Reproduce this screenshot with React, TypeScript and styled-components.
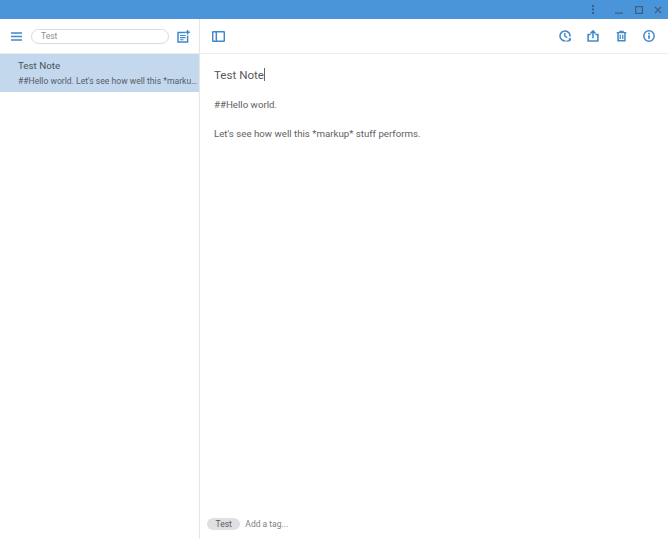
import { createGlobalStyle, styled } from "styled-components";

const ICON_BLUE = "#4289c9";
const CHROME_ICON = "#3d5f80";

const GlobalStyle = createGlobalStyle`
  html, body {
    margin: 0;
    padding: 0;
    height: 100%;
    overflow: hidden;
    background: #fff;
    font-family: Roboto, "Liberation Sans", sans-serif;
  }
  #root { height: 100%; }
`;

const Window = styled.div`
  width: 668px;
  height: 539px;
  display: flex;
  flex-direction: column;
  background: #fff;
`;

const TitleBar = styled.div`
  height: 19px;
  flex: none;
  background: #4a94da;
  display: flex;
  align-items: center;
  justify-content: flex-end;
`;

const TitleButton = styled.button<{ $gap?: number }>`
  width: 19.5px;
  height: 19px;
  margin-right: ${(p) => p.$gap ?? 0}px;
  padding: 0;
  border: 0;
  background: none;
  display: flex;
  align-items: center;
  justify-content: center;
`;

const Body = styled.div`
  flex: 1;
  min-height: 0;
  display: flex;
`;

const Sidebar = styled.aside`
  width: 200px;
  flex: none;
  box-sizing: border-box;
  border-right: 1px solid #e6e6e6;
  display: flex;
  flex-direction: column;
`;

const SideToolbar = styled.div`
  height: 35px;
  flex: none;
  box-sizing: border-box;
  border-bottom: 1px solid #ececec;
  display: flex;
  align-items: center;
  padding: 0 9px 0 9px;
`;

const IconButton = styled.button`
  width: 14px;
  height: 14px;
  padding: 0;
  border: 0;
  background: none;
  flex: none;
  display: flex;
  align-items: center;
  justify-content: center;
`;

const SearchBox = styled.div`
  width: 138px;
  height: 15px;
  box-sizing: border-box;
  margin: 0 auto 0 8px;
  padding-left: 9px;
  border: 1px solid #dadada;
  border-radius: 8px;
  font-size: 8.5px;
  line-height: 13px;
  color: #8f8f8f;
`;

const NoteRow = styled.div`
  height: 38px;
  box-sizing: border-box;
  padding: 6px 2px 0 18px;
  background: #c3d8ed;
`;

const NoteTitle = styled.div`
  font-size: 9.8px;
  line-height: 12px;
  color: #4a525c;
`;

const NotePreview = styled.div`
  margin-top: 3px;
  font-size: 8.6px;
  line-height: 12px;
  color: #555d66;
  white-space: nowrap;
  overflow: hidden;
  text-overflow: ellipsis;
`;

const Main = styled.main`
  flex: 1;
  min-width: 0;
  display: flex;
  flex-direction: column;
`;

const MainToolbar = styled.div`
  height: 35px;
  flex: none;
  box-sizing: border-box;
  border-bottom: 1px solid #ececec;
  display: flex;
  align-items: center;
  padding: 0 12px 0 11px;
`;

const ToolbarActions = styled.div`
  margin-left: auto;
  display: flex;
  gap: 14px;
`;

const Editor = styled.div`
  flex: 1;
  padding: 14px 14px 0;
`;

const Heading = styled.div`
  font-size: 11.6px;
  line-height: 15px;
  color: #595959;
`;

const Caret = styled.span`
  display: inline-block;
  width: 1px;
  height: 13px;
  margin-bottom: -2px;
  background: #666;
`;

const Paragraph = styled.p`
  margin: 14px 0 0;
  font-size: 9.7px;
  line-height: 15px;
  color: #616161;
`;

const TagBar = styled.div`
  height: 31px;
  flex: none;
  display: flex;
  align-items: center;
  padding: 0 7px;
  gap: 5px;
`;

const Tag = styled.span`
  height: 12px;
  padding: 0 8.5px;
  border-radius: 6px;
  background: #e0e0e3;
  font-size: 8.5px;
  line-height: 12px;
  color: #5a5a5a;
`;

const TagPlaceholder = styled.span`
  font-size: 8.5px;
  color: #808080;
`;

const Stroke = {
  fill: "none",
  stroke: ICON_BLUE,
  strokeWidth: 1.5,
} as const;

const App = () => (
  <>
    <GlobalStyle />
    <Window>
      <TitleBar>
        <TitleButton $gap={7}>
          <svg width="4" height="9" viewBox="0 0 4 9">
            <g fill={CHROME_ICON}>
              <rect x="1" y="0" width="2" height="2" />
              <rect x="1" y="3.5" width="2" height="2" />
              <rect x="1" y="7" width="2" height="2" />
            </g>
          </svg>
        </TitleButton>
        <TitleButton>
          <svg width="8" height="8" viewBox="0 0 8 8">
            <rect y="6.5" width="8" height="1.2" fill={CHROME_ICON} />
          </svg>
        </TitleButton>
        <TitleButton>
          <svg width="8" height="8" viewBox="0 0 8 8">
            <rect x=".6" y=".6" width="6.8" height="6.8" fill="none" stroke={CHROME_ICON} strokeWidth="1.2" />
          </svg>
        </TitleButton>
        <TitleButton>
          <svg width="8" height="8" viewBox="0 0 8 8">
            <path d="M1 1l6 6M7 1L1 7" stroke={CHROME_ICON} strokeWidth="1.1" />
          </svg>
        </TitleButton>
      </TitleBar>
      <Body>
        <Sidebar>
          <SideToolbar>
            <IconButton>
              <svg width="11" height="9" viewBox="0 0 11 9">
                <path d="M0 1h11M0 4.5h11M0 8h11" {...Stroke} />
              </svg>
            </IconButton>
            <SearchBox>Test</SearchBox>
            <IconButton>
              <svg width="13" height="13" viewBox="0 0 13 13">
                <path d="M8 2.5H1v9.6h9.6V5.5" {...Stroke} />
                <path d="M3 5.5h5.6M3 7.6h5.6M3 9.7h3.6" {...Stroke} strokeWidth={1.1} />
                <path d="M10.6 0v4.6M8.3 2.3h4.6" {...Stroke} />
              </svg>
            </IconButton>
          </SideToolbar>
          <NoteRow>
            <NoteTitle>Test Note</NoteTitle>
            <NotePreview>##Hello world. Let's see how well this *markup* stuff performs.</NotePreview>
          </NoteRow>
        </Sidebar>
        <Main>
          <MainToolbar>
            <IconButton>
              <svg width="13" height="11" viewBox="0 0 13 11">
                <rect x=".7" y=".7" width="11.6" height="9.6" rx=".8" {...Stroke} />
                <path d="M4.3 1v9" {...Stroke} />
              </svg>
            </IconButton>
            <ToolbarActions>
              <IconButton>
                <svg width="12" height="12" viewBox="0 0 13 13">
                  <path d="M11.8 7.2A5.4 5.4 0 1 0 7 11.8" {...Stroke} strokeWidth={1.7} />
                  <path d="M6.3 3.2v3.4l2.6 1.6" {...Stroke} />
                  <path d="M8 11.8c2 .6 3.8-.4 4.4-2.2M12.8 11.4l-.4-2-2 .5" {...Stroke} strokeWidth={1.4} />
                </svg>
              </IconButton>
              <IconButton>
                <svg width="12" height="12" viewBox="0 0 13 13">
                  <path d="M4 4.8H1.2v7.2h10.6V4.8H9" {...Stroke} strokeWidth={1.7} />
                  <path d="M6.5 9V1.2M3.9 3.6l2.6-2.6 2.6 2.6" {...Stroke} strokeWidth={1.7} />
                </svg>
              </IconButton>
              <IconButton>
                <svg width="11" height="12" viewBox="0 0 13 13">
                  <path d="M.8 2.6h11.4M4.6 2.4V1h3.8v1.4" {...Stroke} />
                  <path d="M2.4 3v9h8.2V3" {...Stroke} strokeWidth={1.8} />
                  <path d="M5 5v5M8 5v5" {...Stroke} />
                </svg>
              </IconButton>
              <IconButton>
                <svg width="12" height="12" viewBox="0 0 13 13">
                  <circle cx="6.5" cy="6.5" r="5.6" {...Stroke} strokeWidth={1.6} />
                  <path d="M6.5 5.6v4" {...Stroke} strokeWidth={1.9} />
                  <rect x="5.5" y="3" width="2" height="1.7" fill={ICON_BLUE} />
                </svg>
              </IconButton>
            </ToolbarActions>
          </MainToolbar>
          <Editor>
            <Heading>
              Test Note
              <Caret />
            </Heading>
            <Paragraph>##Hello world.</Paragraph>
            <Paragraph>Let's see how well this *markup* stuff performs.</Paragraph>
          </Editor>
          <TagBar>
            <Tag>Test</Tag>
            <TagPlaceholder>Add a tag...</TagPlaceholder>
          </TagBar>
        </Main>
      </Body>
    </Window>
  </>
);

export default App;
